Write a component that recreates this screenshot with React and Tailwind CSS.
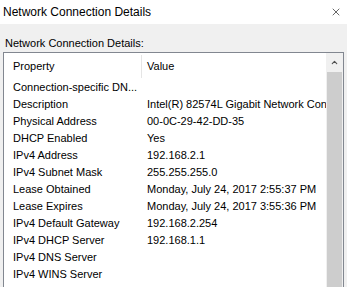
import { X, ChevronUp } from "lucide-react";

const rows = [
  ["Connection-specific DN...", ""],
  ["Description", "Intel(R) 82574L Gigabit Network Connection"],
  ["Physical Address", "00-0C-29-42-DD-35"],
  ["DHCP Enabled", "Yes"],
  ["IPv4 Address", "192.168.2.1"],
  ["IPv4 Subnet Mask", "255.255.255.0"],
  ["Lease Obtained", "Monday, July 24, 2017 2:55:37 PM"],
  ["Lease Expires", "Monday, July 24, 2017 3:55:36 PM"],
  ["IPv4 Default Gateway", "192.168.2.254"],
  ["IPv4 DHCP Server", "192.168.1.1"],
  ["IPv4 DNS Server", ""],
  ["IPv4 WINS Server", ""],
];

export default function App() {
  return (
    <div className="w-[347px] h-[287px] overflow-hidden bg-[#f0f0f0] flex flex-col text-black font-['Liberation_Sans',Arial,sans-serif]">
      <div className="h-[24px] shrink-0 bg-white flex items-center justify-between pl-[3px] pr-[4px]">
        <span className="text-[12px] leading-none">Network Connection Details</span>
        <X className="w-[12px] h-[12px] mr-[1px]" strokeWidth={1.2} />
      </div>

      <div className="pt-[12px] pl-[5px] text-[11px] leading-[14px]">Network Connection Details:</div>

      <div className="mt-[2px] ml-[3px] w-[341px] flex-1 border border-b-0 border-[#828790] bg-white flex overflow-hidden">
        <div className="flex-1 overflow-hidden text-[11px]">
          <div className="h-[26px] flex items-center">
            <div className="w-[137px] pl-[9px] shrink-0">Property</div>
            <div className="w-px h-[23px] bg-[#e5e5e5] shrink-0" />
            <div className="pl-[5px]">Value</div>
          </div>
          {rows.map(([name, value]) => (
            <div key={name} className="h-[17px] flex items-center whitespace-nowrap">
              <div className="w-[138px] pl-[9px] shrink-0 overflow-hidden">{name}</div>
              <div className="pl-[5px]">{value}</div>
            </div>
          ))}
        </div>
        <div className="w-[17px] shrink-0 bg-[#f0f0f0] flex flex-col">
          <div className="h-[19px] flex items-center justify-center">
            <ChevronUp className="w-[9px] h-[9px] text-[#505050]" strokeWidth={3} />
          </div>
          <div className="flex-1 ml-[1px] w-[15px] bg-[#cdcdcd]" />
        </div>
      </div>
    </div>
  );
}
